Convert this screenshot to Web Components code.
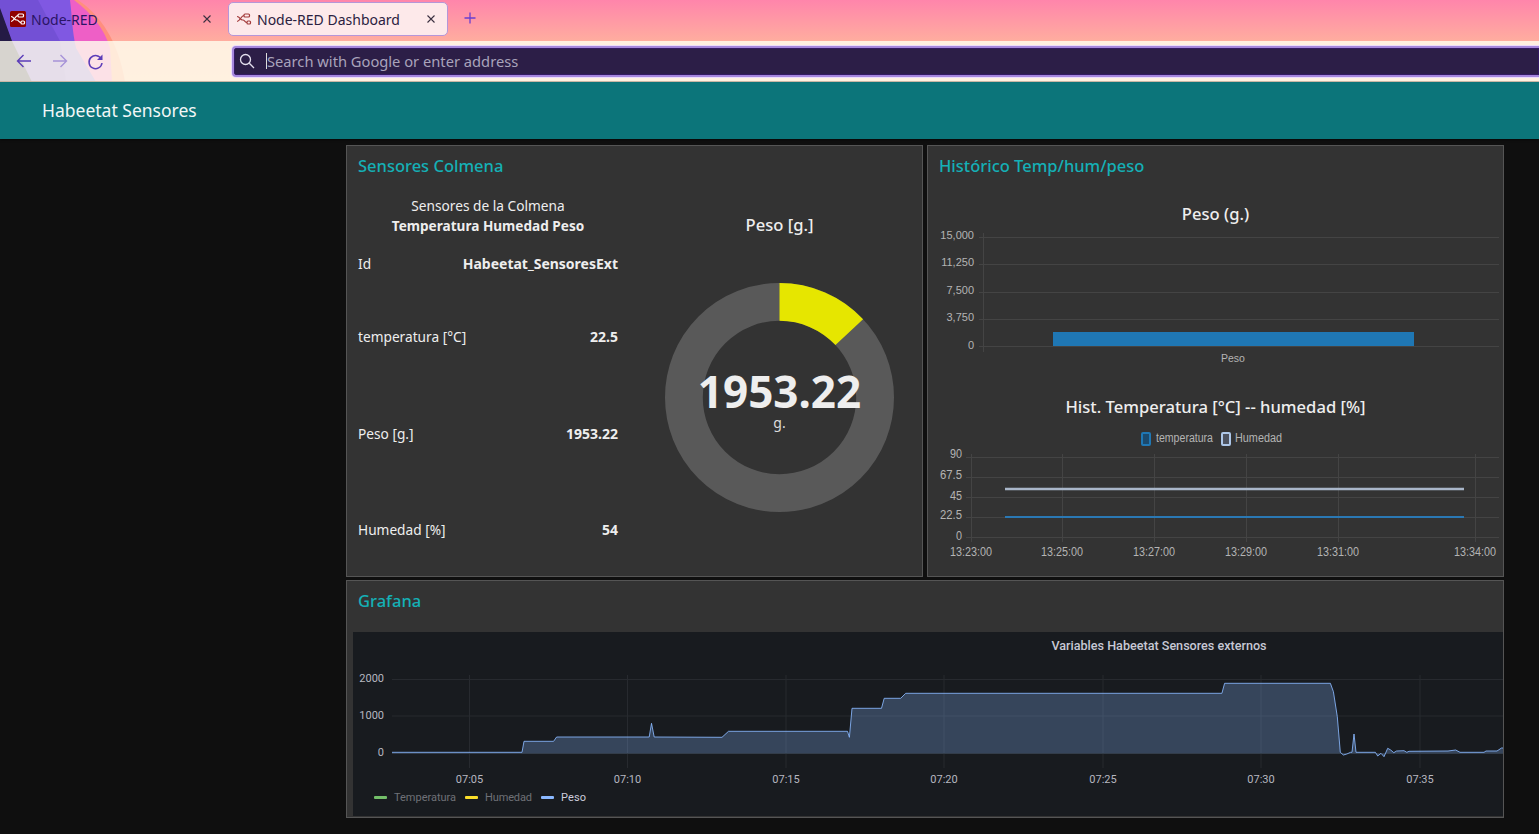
<!DOCTYPE html>
<html lang="es">
<head>
<meta charset="utf-8">
<title>Node-RED Dashboard</title>
<style>
  html, body { margin: 0; height: 100%; background: #0f0f0f; overflow: hidden; }
  body { font-family: "Noto Sans", "Open Sans", sans-serif; }
</style>
</head>
<body>
<browser-bar></browser-bar>
<dash-header>Habeetat Sensores</dash-header>
<dash-grid>
  <dash-card heading="Sensores Colmena">
    <sensor-table></sensor-table>
    <donut-gauge label="Peso [g.]" value="1953.22" max="15000" unit="g."></donut-gauge>
  </dash-card>
  <dash-card heading="Histórico Temp/hum/peso" stacked>
    <bar-chart label="Peso (g.)"></bar-chart>
    <line-chart label="Hist. Temperatura [°C] -- humedad [%]"></line-chart>
  </dash-card>
  <dash-card heading="Grafana" wide>
    <grafana-panel label="Variables Habeetat Sensores externos"></grafana-panel>
  </dash-card>
</dash-grid>

<script>
(() => {
  const uiFont = `"Noto Sans", "Open Sans", sans-serif`;
  const axisFont = `"Liberation Sans", Arial, sans-serif`;

  const nodeIcon = (stroke) => `
    <g fill="none" stroke="${stroke}" stroke-width="1.2">
      <path d="M1 5.500C4 5.500 4 9 6.500 9H7C8.500 9 9 11.500 11 11.500"/>
      <path d="M1 10.500C4 10.500 5 4.500 8 4.500"/>
      <rect x="8" y="3" width="5.500" height="3" rx="1"/>
      <rect x="11" y="10" width="3.500" height="3" rx="1"/>
    </g>`;
  const closeIcon = `<svg width="16" height="16" viewBox="0 0 16 16"><path d="M4.500 4.500l7 7M11.500 4.500l-7 7" stroke="#3a3040" stroke-width="1.100"/></svg>`;

  class BrowserBar extends HTMLElement {
    connectedCallback() {
      this.attachShadow({ mode: "open" }).innerHTML = `
        <style>
          :host { display: block; position: relative; height: 82px; overflow: hidden;
            font-family: ${uiFont}; background: #ffa9a0; }
          .art { position: absolute; inset: 0; width: 100%; height: 100%; }
          .tabs { position: relative; height: 41px; display: flex; align-items: flex-start; }
          .tab { box-sizing: border-box; display: flex; align-items: center; height: 34px; margin-top: 2px;
            font-size: 14px; color: #2a1466; }
          .tab svg { flex: none; }
          .tab span { flex: 1; white-space: nowrap; }
          .first { width: 228px; padding: 0 13px 0 10px; }
          .first span { margin-left: 5px; }
          .active { width: 220px; padding: 0 8px 0 7px; background: #fde9ea; border: 1.5px solid #b596d8;
            border-radius: 5px; color: #2b2140; }
          .active span { margin-left: 5px; }
          .plus { margin: 11px 0 0 15px; }
          .toolbar { position: relative; height: 41px; display: flex; align-items: center;
            background: rgba(255, 254, 238, .82); border-bottom: 1px solid #c9b7a6; box-sizing: border-box; }
          .nav { display: flex; gap: 16px; padding-left: 14px; width: 232px; box-sizing: border-box; }
          .url { flex: 1; box-sizing: border-box; height: 31px; display: flex; align-items: center;
            background: #2c1e47; border: 2px solid #a586dc; border-right: 0; border-radius: 4px 0 0 4px;
            box-shadow: 0 0 0 1px #ecdcfb, inset 0 0 0 1px #341a63;
            color: #a9a3bb; font-size: 14.700px; padding-left: 5px; }
          .url i { width: 1px; height: 16px; background: #ddd; margin: 0 0 0 11px; }
        </style>
        <svg class="art" viewBox="0 0 1539 82" preserveAspectRatio="none" aria-hidden="true">
          <defs>
            <linearGradient id="sky" x1="0" y1="0" x2="0" y2="1">
              <stop offset="0" stop-color="#ff85ab"/>
              <stop offset=".5" stop-color="#ffad9f"/>
              <stop offset="1" stop-color="#ffb5a0"/>
            </linearGradient>
          </defs>
          <rect width="1539" height="82" fill="url(#sky)"/>
          <path d="M78 0C100 15 118 40 125 82H0V0Z" fill="#ff8f7d"/>
          <path d="M74 0C92 14 104 28 110 48L112 82H0V0Z" fill="#ee5fc6"/>
          <path d="M70 0C72 15 72 30 76 48L96 82H0V0Z" fill="#8058e2"/>
          <path d="M0 0H38L60 41L66 82H0Z" fill="#5f46c4" opacity=".4"/>
          <path d="M0 8L12 41L32 82H0Z" fill="#241a45"/>
        </svg>
        <div class="tabs">
          <div class="tab first">
            <svg width="16" height="16" viewBox="0 0 16 16"><rect width="16" height="16" rx="1.500" fill="#8f0000"/>${nodeIcon("#fff")}</svg>
            <span>Node-RED</span>
            ${closeIcon}
          </div>
          <div class="tab active">
            <svg width="16" height="16" viewBox="0 0 16 16">${nodeIcon("#a23a3a")}</svg>
            <span>Node-RED Dashboard</span>
            ${closeIcon}
          </div>
          <svg class="plus" width="14" height="14" viewBox="0 0 14 14"><path d="M7 1.500v11M1.500 7h11" stroke="#6a3fd0" stroke-width="1.300"/></svg>
        </div>
        <div class="toolbar">
          <div class="nav">
            <svg width="20" height="20" viewBox="0 0 20 20"><path d="M17 10H3.500M9.500 4l-6 6 6 6" fill="none" stroke="#5b3cb8" stroke-width="1.400"/></svg>
            <svg width="20" height="20" viewBox="0 0 20 20"><path d="M3 10h13.500M10.500 4l6 6-6 6" fill="none" stroke="#a793d8" stroke-width="1.400"/></svg>
            <svg width="20" height="20" viewBox="0 0 20 20"><path d="M15.500 8.500A6.500 6.500 0 1 0 16 12" fill="none" stroke="#5b3cb8" stroke-width="1.500"/><path d="M16.500 3.500v5.500h-5.500z" fill="#5b3cb8"/></svg>
          </div>
          <div class="url">
            <svg width="16" height="16" viewBox="0 0 16 16"><circle cx="6.500" cy="6.500" r="5" fill="none" stroke="#e4e0ee" stroke-width="1.300"/><path d="M10.300 10.300L15 15" stroke="#e4e0ee" stroke-width="1.300"/></svg>
            <i></i><span>Search with Google or enter address</span>
          </div>
        </div>`;
    }
  }

  class DashHeader extends HTMLElement {
    connectedCallback() {
      this.attachShadow({ mode: "open" }).innerHTML = `
        <style>
          :host { display: flex; align-items: center; box-sizing: border-box; height: 57px; padding: 0 0 2px 42px;
            background: #0c757a; color: #f2f7f7; font: 400 17.500px ${uiFont};
            box-shadow: 0 1px 2px rgba(0,0,0,.5); }
        </style>
        <slot></slot>`;
    }
  }

  class DashGrid extends HTMLElement {
    connectedCallback() {
      this.attachShadow({ mode: "open" }).innerHTML = `
        <style>
          :host { display: grid; grid-template-columns: 577px 577px; grid-template-rows: 432px 238px; gap: 3px 4px;
            padding: 6px 0 0 346px; }
        </style>
        <slot></slot>`;
    }
  }

  class DashCard extends HTMLElement {
    connectedCallback() {
      this.attachShadow({ mode: "open" }).innerHTML = `
        <style>
          :host { display: block; box-sizing: border-box; background: #333; border: 1px solid #555;
            color: #eee; font-family: ${uiFont}; overflow: hidden; }
          :host([wide]) { grid-column: 1 / -1; }
          h2 { margin: 0; height: 40px; line-height: 40px; padding-left: 11px; color: #15b0b6;
            font-size: 16.500px; font-weight: 500; }
          .body { display: grid; grid-template-columns: 260px 283px; column-gap: 20px; padding-left: 11px; }
          :host([stacked]) .body { display: block; padding: 14px 0 0; }
          :host([wide]) .body { display: block; padding: 11px 0 0 6px; }
        </style>
        <h2>${this.getAttribute("heading")}</h2>
        <div class="body"><slot></slot></div>`;
    }
  }

  class SensorTable extends HTMLElement {
    connectedCallback() {
      const rows = [
        { name: "Id", value: "Habeetat_SensoresExt", gap: 18 },
        { name: "temperatura [°C]", value: "22.5", gap: 53 },
        { name: "Peso [g.]", value: "1953.22", gap: 77 },
        { name: "Humedad [%]", value: "54", gap: 76 },
      ];
      this.attachShadow({ mode: "open" }).innerHTML = `
        <style>
          :host { display: block; padding-top: 10px; font-size: 13.700px; line-height: 20px; }
          .head { text-align: center; }
          .head b { font-size: 13.600px; }
          b { font-weight: 700; }
          .row { display: flex; justify-content: space-between; }
          .row b { font-size: 14px; }
          .row:first-of-type b { letter-spacing: .25px; }
        </style>
        <div class="head">Sensores de la Colmena<br><b>Temperatura Humedad Peso</b></div>
        ${rows.map((r) => `<div class="row" style="margin-top:${r.gap}px"><span>${r.name}</span><b>${r.value}</b></div>`).join("")}`;
    }
  }

  class DonutGauge extends HTMLElement {
    connectedCallback() {
      const value = parseFloat(this.getAttribute("value"));
      const max = parseFloat(this.getAttribute("max"));
      const a = (value / max) * 2 * Math.PI;
      const cx = 141.5, cy = 172.5, ro = 114.5, ri = 76.7;
      const pt = (r, t) => `${(cx + r * Math.sin(t)).toFixed(2)} ${(cy - r * Math.cos(t)).toFixed(2)}`;
      this.attachShadow({ mode: "open" }).innerHTML = `
        <style>
          :host { display: block; font-family: ${uiFont}; }
          .t { text-align: center; font-size: 16.600px; font-weight: 500; line-height: 24px; margin-top: 27px; }
          svg { display: block; margin-top: 38px; }
        </style>
        <div class="t">${this.getAttribute("label")}</div>
        <svg width="283" height="300" viewBox="0 50 283 300">
          <circle cx="${cx}" cy="${cy}" r="${(ro + ri) / 2}" fill="none" stroke="#595959" stroke-width="${ro - ri}"/>
          <path d="M${pt(ro, 0)}A${ro} ${ro} 0 0 1 ${pt(ro, a)}L${pt(ri, a)}A${ri} ${ri} 0 0 0 ${pt(ri, 0)}Z" fill="#e6e600"/>
          <text x="${cx}" y="183" text-anchor="middle" fill="#eee" font-size="44" font-weight="700">${this.getAttribute("value")}</text>
          <text x="${cx}" y="203" text-anchor="middle" fill="#ddd" font-size="14">${this.getAttribute("unit")}</text>
        </svg>`;
    }
  }

  // shared bits for the two chart.js looking charts
  const chartStyle = `
    :host { display: block; }
    .t { text-align: center; height: 28px; font: 500 16.600px/28px ${uiFont}; }
    svg { display: block; }
    text { font-family: ${axisFont}; fill: #b4b4b4; }
    line { stroke: #444; stroke-width: 1; }
  `;

  class BarChart extends HTMLElement {
    connectedCallback() {
      const ticks = [["15,000", 9, 11], ["11,250", 36, 38], ["7,500", 64, 66], ["3,750", 91, 93], ["0", 118, 121]];
      this.attachShadow({ mode: "open" }).innerHTML = `
        <style>${chartStyle}</style>
        <div class="t">${this.getAttribute("label")}</div>
        <svg width="574" height="144" viewBox="0 0 574 144">
          ${ticks.map(([s, y, by]) => `
            <line x1="51" x2="571" y1="${y + .5}" y2="${y + .5}"/>
            <text x="46" y="${by}" text-anchor="end" font-size="11">${s}</text>`).join("")}
          <line x1="55.500" x2="55.500" y1="5" y2="124"/>
          <rect x="125" y="104" width="361" height="14" fill="#1f77b4"/>
          <text x="305" y="134" text-anchor="middle" font-size="10.500">Peso</text>
        </svg>`;
    }
  }

  class LineChart extends HTMLElement {
    connectedCallback() {
      const yTicks = [["90", 36, 37, 12], ["67.5", 56, 58, 22], ["45", 76, 79, 12], ["22.5", 96, 98, 22], ["0", 116, 119, 6]];
      const xTicks = [["13:23:00", 43], ["13:25:00", 134], ["13:27:00", 226], ["13:29:00", 318], ["13:31:00", 410], ["13:34:00", 547]];
      this.attachShadow({ mode: "open" }).innerHTML = `
        <style>${chartStyle} :host { margin-top: 21px; }</style>
        <div class="t">${this.getAttribute("label")}</div>
        <svg width="574" height="155" viewBox="0 0 574 155">
          <rect x="214" y="12" width="8" height="12" rx="1" fill="#1b4a6e" stroke="#1f77b4" stroke-width="2"/>
          <text x="228" y="21" font-size="12" textLength="57" lengthAdjust="spacingAndGlyphs">temperatura</text>
          <rect x="294" y="12" width="8" height="12" rx="1" fill="#4d5360" stroke="#aec7e8" stroke-width="2"/>
          <text x="307" y="21" font-size="12" textLength="47" lengthAdjust="spacingAndGlyphs">Humedad</text>
          ${yTicks.map(([s, y, by, w]) => `
            <line x1="38" x2="571" y1="${y + .5}" y2="${y + .5}"/>
            <text x="${34 - w}" y="${by}" font-size="12" textLength="${w}" lengthAdjust="spacingAndGlyphs">${s}</text>`).join("")}
          ${xTicks.map(([s, x]) => `
            <line x1="${x + .5}" x2="${x + .5}" y1="33" y2="121"/>
            <text x="${x}" y="135" text-anchor="middle" font-size="12" textLength="42" lengthAdjust="spacingAndGlyphs">${s}</text>`).join("")}
          <line style="stroke:#a9b6c9;stroke-width:2.500" x1="77" x2="536" y1="68" y2="68"/>
          <line style="stroke:#2a78b4;stroke-width:2" x1="77" x2="536" y1="96" y2="96"/>
        </svg>`;
    }
  }

  class GrafanaPanel extends HTMLElement {
    connectedCallback() {
      // page x/y of the Peso series, read off the picture
      const pts = [[392,752.3],[522,752.3],[524,741.3],[553.6,741.3],[556.6,737],[649.2,737],[651.5,723.3],[654.2,737],
        [722,737.3],[728.5,731.3],[847.5,731.3],[849.4,737.3],[852,708.3],[881.5,708.3],[884.2,698.3],[900.7,698.3],
        [905.7,693.3],[1221.9,693.3],[1224.6,683.3],[1330.4,683.3],[1333.4,691.7],[1337.3,716.7],[1340.3,752.3],
        [1343.4,755],[1346.8,754],[1350.6,752.3],[1352,752.3],[1354,734],[1356,752.3],[1375.4,752.3],[1377.7,756],
        [1381,753.3],[1384,756.7],[1387.7,748.3],[1390.7,750],[1393.8,752.7],[1396.5,751],[1404,750.7],[1406.8,752.3],
        [1409,751.3],[1448,751],[1455.7,750],[1460,752.3],[1484,752.3],[1486,751],[1497,751],[1501.5,748],[1503,748]];
      const ox = 352, oy = 632, base = 753.5 - oy;
      const line = pts.map(([x, y]) => `${(x - ox).toFixed(1)},${(y - oy).toFixed(1)}`).join(" ");
      const yTicks = [["2000", 47.5, 49.5], ["1000", 84, 87], ["0", 121.5, 123.5]];
      const xTicks = [["07:05", 117.5], ["07:10", 275.5], ["07:15", 434], ["07:20", 592], ["07:25", 751], ["07:30", 909], ["07:35", 1068]];
      const legend = [
        { name: "Temperatura", color: "#73bf69", x: 22, lx: 42, w: 62, fill: "#6f7177" },
        { name: "Humedad", color: "#fade2a", x: 113, lx: 133, w: 47, fill: "#6f7177" },
        { name: "Peso", color: "#8ab8ff", x: 189, lx: 209, w: 25, fill: "#ccccdc" },
      ];
      this.attachShadow({ mode: "open" }).innerHTML = `
        <style>
          :host { display: block; height: 184px; background: #181b1f; overflow: hidden; font-family: Roboto, sans-serif; }
          svg { display: block; }
          text { font-family: Roboto, sans-serif; fill: #b6b7c0; font-size: 11px; }
          line { stroke: #272a2f; stroke-width: 1; }
        </style>
        <svg width="1151" height="184" viewBox="1 0 1151 184">
          <text x="807" y="18" text-anchor="middle" style="font-size:12.600px;font-weight:500;fill:#c7c8d4">${this.getAttribute("label")}</text>
          ${yTicks.map(([s, y, by]) => `
            <line x1="40" x2="1152" y1="${y}" y2="${y}"/>
            <text x="32" y="${by}" text-anchor="end">${s}</text>`).join("")}
          ${xTicks.map(([s, x]) => `
            <line x1="${x}" x2="${x}" y1="43" y2="136"/>
            <text x="${x}" y="151" text-anchor="middle">${s}</text>`).join("")}
          <polygon points="${(392 - ox)},${base} ${line} ${(1503 - ox)},${base}" fill="rgba(138,184,255,.27)"/>
          <polyline points="${line}" fill="none" stroke="#8ab8ff" stroke-opacity=".85" stroke-width="1"/>
          ${legend.map((l) => `
            <rect x="${l.x}" y="164" width="13" height="3" rx="1" fill="${l.color}"/>
            <text x="${l.lx}" y="169" textLength="${l.w}" style="fill:${l.fill}">${l.name}</text>`).join("")}
        </svg>`;
    }
  }

  customElements.define("browser-bar", BrowserBar);
  customElements.define("dash-header", DashHeader);
  customElements.define("dash-grid", DashGrid);
  customElements.define("dash-card", DashCard);
  customElements.define("sensor-table", SensorTable);
  customElements.define("donut-gauge", DonutGauge);
  customElements.define("bar-chart", BarChart);
  customElements.define("line-chart", LineChart);
  customElements.define("grafana-panel", GrafanaPanel);
})();
</script>
</body>
</html>
